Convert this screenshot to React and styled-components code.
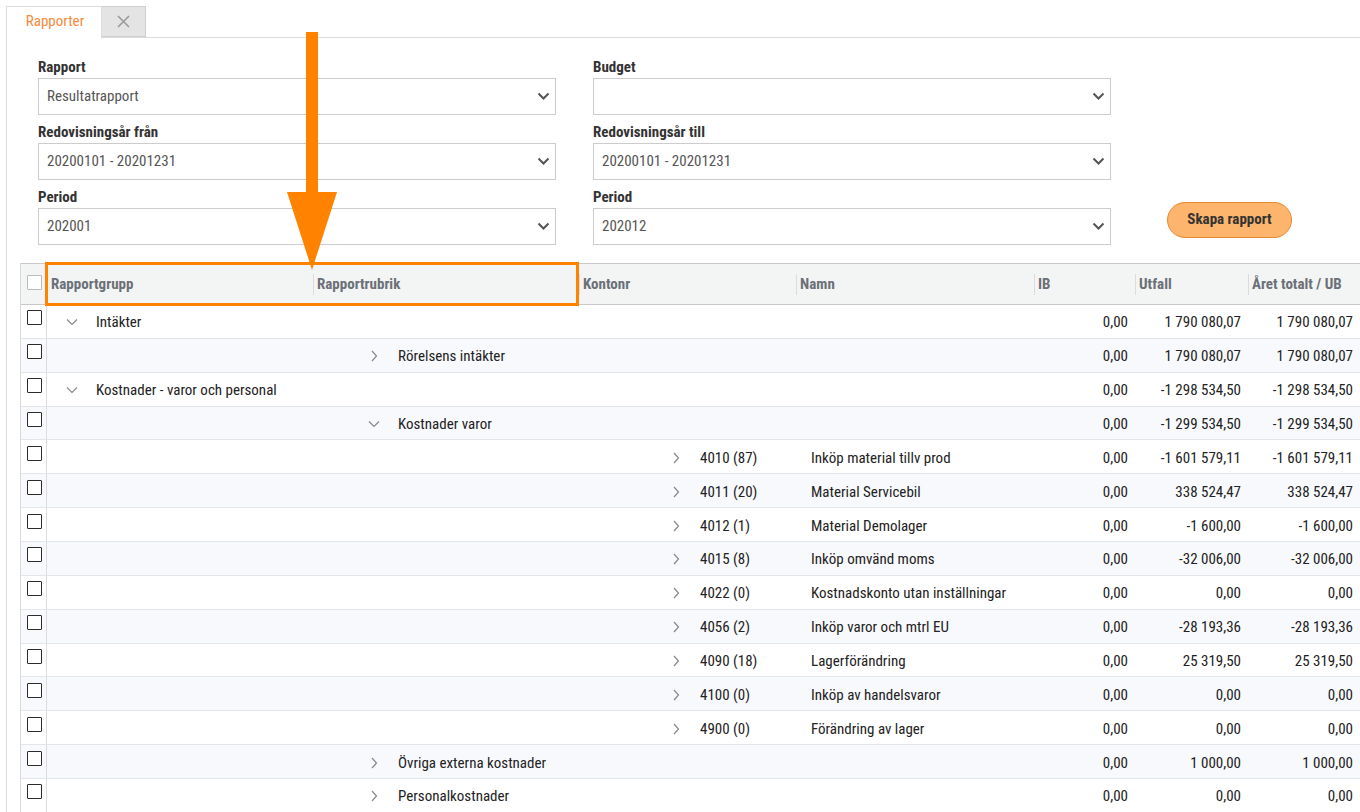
import styled, { createGlobalStyle } from "styled-components";

const orange = "#ff8200";
const font = `"Roboto Condensed", "Liberation Sans Narrow", "DejaVu Sans Condensed", Roboto, sans-serif`;
const cols = "26px 266px 266px 217px 238px 101px 113px 113px";

const GlobalStyle = createGlobalStyle`
  html, body {
    margin: 0;
    padding: 0;
    background: #ffffff;
    overflow: hidden;
  }
  body {
    font-family: ${font};
    font-size: 15px;
    color: #222;
  }
`;

const Root = styled.div`
  position: relative;
  width: 1360px;
  height: 812px;
  padding-top: 6px;
  box-sizing: border-box;
  overflow: hidden;
`;

const TabBar = styled.div`
  display: flex;
  height: 31px;
  margin-left: 6px;
  border-bottom: 1px solid #dcdcdc;
`;

const Tab = styled.div`
  width: 96px;
  height: 32px;
  box-sizing: border-box;
  display: flex;
  align-items: center;
  justify-content: center;
  border: 1px solid #dcdcdc;
  border-bottom: none;
  background: #fff;
  color: #f5893a;
  font-size: 15px;
  padding: 0 0 3px 2px;
`;

const CloseTab = styled.div`
  width: 44px;
  height: 31px;
  box-sizing: border-box;
  display: flex;
  align-items: center;
  justify-content: center;
  border: 1px solid #cfcfcf;
  border-left: none;
  background: #e4e4e4;
  margin-bottom: -1px;
`;

const Panel = styled.div`
  margin-left: 6px;
  border-left: 1px solid #dcdcdc;
  height: 800px;
  padding-top: 19px;
`;

const Form = styled.div`
  display: grid;
  grid-template-columns: 518px 518px auto;
  column-gap: 37px;
  row-gap: 7px;
  padding-left: 31px;
`;

const Field = styled.div`
  display: flex;
  flex-direction: column;
`;

const Label = styled.div`
  font-weight: 700;
  color: #333;
  font-size: 15px;
  height: 19px;
  line-height: 21px;
  margin-bottom: 2px;
`;

const SelectBox = styled.div`
  height: 37px;
  box-sizing: border-box;
  border: 1px solid #cccccc;
  display: flex;
  align-items: center;
  justify-content: space-between;
  padding: 0 5px 1px 8px;
  color: #555;
  font-size: 15px;
`;

const ButtonCell = styled.div`
  display: flex;
  align-items: flex-end;
  padding-left: 19px;
  padding-bottom: 7px;
`;

const Button = styled.button`
  width: 125px;
  height: 36px;
  border-radius: 18px;
  border: 1px solid #e8892f;
  background: #fdb46c;
  font-family: ${font};
  font-weight: 700;
  font-size: 15px;
  color: #333;
  padding: 0 0 2px;
`;

const Table = styled.div`
  margin-top: 18px;
  margin-left: 13px;
  border-left: 1px solid #dadada;
`;

const HeaderRow = styled.div`
  display: grid;
  grid-template-columns: ${cols};
  height: 40px;
  background: #f3f5f5;
  border-top: 1px solid #c8c8c8;
  border-bottom: 1px solid #c8c8c8;
`;

const HeadCell = styled.div`
  display: flex;
  align-items: center;
  padding-left: 4px;
  font-weight: 700;
  color: #6b7077;
  font-size: 15px;
  white-space: nowrap;
  position: relative;
  &::before {
    content: "";
    display: ${(p) => (p.$sep ? "block" : "none")};
    position: absolute;
    left: 0;
    top: 10px;
    bottom: 9px;
    width: 1px;
    background: #dcdcdc;
  }
`;

const CheckCell = styled.div`
  display: flex;
  align-items: center;
  justify-content: center;
  padding-bottom: ${(p) => (p.$head ? 4 : 7)}px;
  padding-left: 1px;
  margin-top: ${(p) => (p.$head ? 0 : -2)}px;
  border-right: ${(p) => (p.$head ? "none" : "1px solid #dcdcdc")};
`;

const Check = styled.div`
  width: 15px;
  height: 15px;
  box-sizing: border-box;
  border: ${(p) => (p.$light ? "1px solid #b9bcc0" : "1.5px solid #2b2b2b")};
  border-radius: 1px;
  background: #fff;
`;

const Row = styled.div`
  display: grid;
  grid-template-columns: ${cols};
  height: 30.86px;
  padding-top: 2px;
  border-bottom: 1px solid #e2e5ea;
  background: ${(p) => (p.$alt ? "#f8f9fc" : "#ffffff")};
`;

const TreeCell = styled.div`
  grid-column: ${(p) => (p.$level === 2 ? "2 / 5" : "2 / 6")};
  display: flex;
  align-items: center;
  padding-left: ${(p) => 19 + p.$level * 302}px;
  white-space: nowrap;
  color: #222;
`;

const Toggle = styled.span`
  width: 12px;
  display: inline-flex;
  justify-content: center;
  margin-right: 18px;
`;

const NameCell = styled.div`
  display: flex;
  align-items: center;
  padding-left: 15px;
  white-space: nowrap;
`;

const NumCell = styled.div`
  display: flex;
  align-items: center;
  justify-content: flex-end;
  padding-right: ${(p) => p.$pr || 7}px;
  white-space: nowrap;
  grid-column: ${(p) => p.$col};
`;

const HighlightBox = styled.div`
  position: absolute;
  left: 45px;
  top: 262px;
  width: 534px;
  height: 44px;
  box-sizing: border-box;
  border: 3px solid ${orange};
  pointer-events: none;
`;

const Arrow = styled.svg`
  position: absolute;
  left: 284px;
  top: 32px;
  pointer-events: none;
`;

const ChevronDown = ({ color = "#888", w = 12, sw = 1.2 }) => (
  <svg width={w} height="8" viewBox="0 0 12 8">
    <path d="M1 1.5 L6 6.5 L11 1.5" fill="none" stroke={color} strokeWidth={sw} />
  </svg>
);

const ChevronRight = () => (
  <svg width="8" height="12" viewBox="0 0 8 12">
    <path d="M2 1 L6.5 6 L2 11" fill="none" stroke="#888" strokeWidth="1.2" />
  </svg>
);

const rows = [
  { level: 0, open: true, label: "Intäkter", ib: "0,00", ut: "1 790 080,07", tot: "1 790 080,07" },
  { level: 1, open: false, label: "Rörelsens intäkter", ib: "0,00", ut: "1 790 080,07", tot: "1 790 080,07" },
  { level: 0, open: true, label: "Kostnader - varor och personal", ib: "0,00", ut: "-1 298 534,50", tot: "-1 298 534,50" },
  { level: 1, open: true, label: "Kostnader varor", ib: "0,00", ut: "-1 299 534,50", tot: "-1 299 534,50" },
  { level: 2, label: "4010 (87)", name: "Inköp material tillv prod", ib: "0,00", ut: "-1 601 579,11", tot: "-1 601 579,11" },
  { level: 2, label: "4011 (20)", name: "Material Servicebil", ib: "0,00", ut: "338 524,47", tot: "338 524,47" },
  { level: 2, label: "4012 (1)", name: "Material Demolager", ib: "0,00", ut: "-1 600,00", tot: "-1 600,00" },
  { level: 2, label: "4015 (8)", name: "Inköp omvänd moms", ib: "0,00", ut: "-32 006,00", tot: "-32 006,00" },
  { level: 2, label: "4022 (0)", name: "Kostnadskonto utan inställningar", ib: "0,00", ut: "0,00", tot: "0,00" },
  { level: 2, label: "4056 (2)", name: "Inköp varor och mtrl EU", ib: "0,00", ut: "-28 193,36", tot: "-28 193,36" },
  { level: 2, label: "4090 (18)", name: "Lagerförändring", ib: "0,00", ut: "25 319,50", tot: "25 319,50" },
  { level: 2, label: "4100 (0)", name: "Inköp av handelsvaror", ib: "0,00", ut: "0,00", tot: "0,00" },
  { level: 2, label: "4900 (0)", name: "Förändring av lager", ib: "0,00", ut: "0,00", tot: "0,00" },
  { level: 1, open: false, label: "Övriga externa kostnader", ib: "0,00", ut: "1 000,00", tot: "1 000,00" },
  { level: 1, open: false, label: "Personalkostnader", ib: "0,00", ut: "0,00", tot: "0,00" },
];

const fields = [
  { label: "Rapport", value: "Resultatrapport" },
  { label: "Budget", value: "" },
  { label: "Redovisningsår från", value: "20200101 - 20201231" },
  { label: "Redovisningsår till", value: "20200101 - 20201231" },
  { label: "Period", value: "202001" },
  { label: "Period", value: "202012" },
];

const Select = ({ label, value }) => (
  <Field>
    <Label>{label}</Label>
    <SelectBox>
      <span>{value}</span>
      <ChevronDown color="#555" w={13} sw={2} />
    </SelectBox>
  </Field>
);

export default function App() {
  return (
    <Root>
      <GlobalStyle />
      <TabBar>
        <Tab>Rapporter</Tab>
        <CloseTab>
          <svg width="13" height="13" viewBox="0 0 13 13">
            <path d="M1 1 L12 12 M12 1 L1 12" stroke="#9a9a9a" strokeWidth="1.6" />
          </svg>
        </CloseTab>
      </TabBar>
      <Panel>
        <Form>
          <Select {...fields[0]} />
          <Select {...fields[1]} />
          <div />
          <Select {...fields[2]} />
          <Select {...fields[3]} />
          <div />
          <Select {...fields[4]} />
          <Select {...fields[5]} />
          <ButtonCell>
            <Button>Skapa rapport</Button>
          </ButtonCell>
        </Form>
        <Table>
          <HeaderRow>
            <CheckCell $head>
              <Check $light />
            </CheckCell>
            <HeadCell>Rapportgrupp</HeadCell>
            <HeadCell $sep>Rapportrubrik</HeadCell>
            <HeadCell $sep>Kontonr</HeadCell>
            <HeadCell $sep>Namn</HeadCell>
            <HeadCell $sep>IB</HeadCell>
            <HeadCell $sep>Utfall</HeadCell>
            <HeadCell $sep>Året totalt / UB</HeadCell>
          </HeaderRow>
          {rows.map((r, i) => (
            <Row key={i} $alt={i % 2 === 1}>
              <CheckCell>
                <Check />
              </CheckCell>
              <TreeCell $level={r.level}>
                <Toggle>{r.open ? <ChevronDown /> : <ChevronRight />}</Toggle>
                {r.label}
              </TreeCell>
              {r.level === 2 && <NameCell>{r.name}</NameCell>}
              <NumCell $col="6">{r.ib}</NumCell>
              <NumCell $col="7">{r.ut}</NumCell>
              <NumCell $col="8" $pr={8}>{r.tot}</NumCell>
            </Row>
          ))}
        </Table>
      </Panel>
      <HighlightBox />
      <Arrow width="56" height="240" viewBox="0 0 56 240">
        <rect x="22" y="0" width="12" height="165" fill={orange} />
        <polygon points="3,160 53,160 28,238" fill={orange} />
      </Arrow>
    </Root>
  );
}
